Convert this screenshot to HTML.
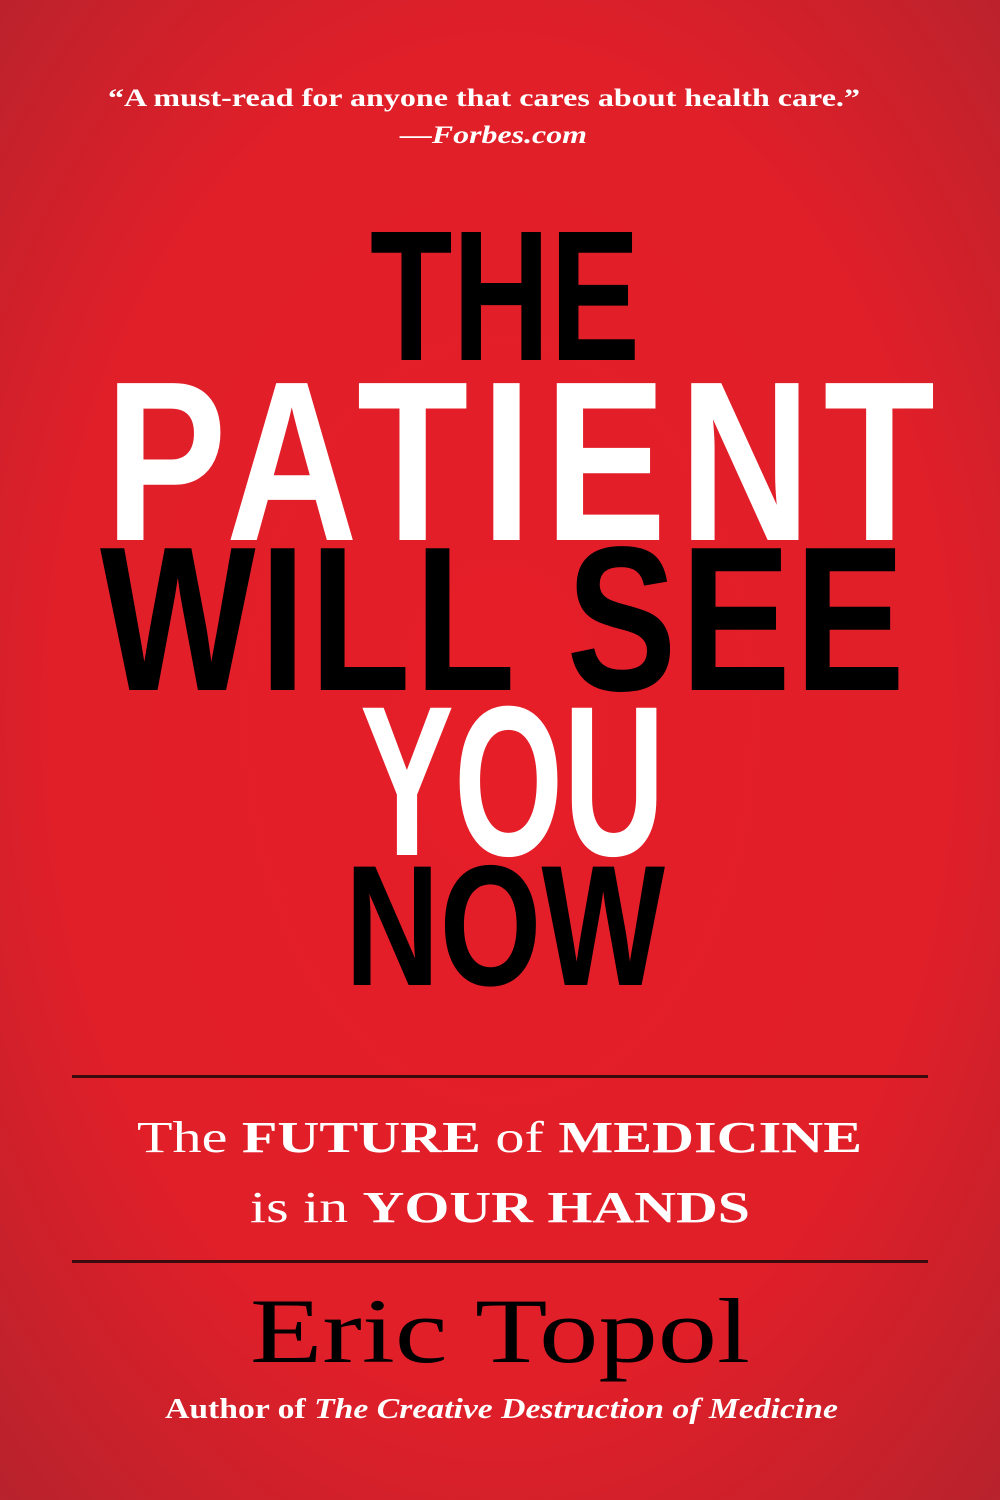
<!DOCTYPE html>
<html><head><meta charset="utf-8"><style>
html,body{margin:0;padding:0;}
body{width:1000px;height:1500px;overflow:hidden;}
svg{display:block;}
</style></head><body>
<svg width="1000" height="1500" viewBox="0 0 1000 1500" xmlns="http://www.w3.org/2000/svg">
<defs>
<radialGradient id="bg" cx="50%" cy="48%" r="75%">
<stop offset="0" stop-color="#e61e28"/>
<stop offset="0.6" stop-color="#e01f29"/>
<stop offset="1" stop-color="#b3232d"/>
</radialGradient>
</defs>
<rect width="1000" height="1500" fill="url(#bg)"/>
<g font-family="'Liberation Serif',serif" font-weight="bold" fill="#fff">
<text x="108" y="106" font-size="25" textLength="752" lengthAdjust="spacingAndGlyphs">“A must-read for anyone that cares about health care.”</text>
<text x="400" y="143" font-size="25" font-style="italic" textLength="187" lengthAdjust="spacingAndGlyphs">—Forbes.com</text>
</g>
<g font-family="'Liberation Sans',sans-serif" font-weight="bold">
<text x="370" y="360" font-size="186" fill="#000" textLength="270" lengthAdjust="spacingAndGlyphs">THE</text>
<text x="360" y="855" font-size="214" fill="#fff" textLength="305" lengthAdjust="spacingAndGlyphs">YOU</text>
<text x="345" y="985" font-size="172" fill="#000" textLength="320" lengthAdjust="spacingAndGlyphs">NOW</text>
</g>
<g font-family="'Liberation Sans',sans-serif" font-weight="bold" transform="scale(0.8,1)">
<text x="131.25" y="540" font-size="228" fill="#fff" textLength="1037.5" lengthAdjust="spacing">PATIENT</text>
<text x="125" y="690" font-size="206" fill="#000" textLength="1006" lengthAdjust="spacing">WILL SEE</text>
</g>
<rect x="72" y="1075" width="856" height="3" fill="#3a0a0c"/>
<rect x="72" y="1260" width="856" height="3" fill="#3a0a0c"/>
<g font-family="'Liberation Serif',serif" fill="#fff">
<text x="137" y="1152" font-size="44" textLength="725" lengthAdjust="spacingAndGlyphs">The <tspan font-weight="bold">FUTURE</tspan> of <tspan font-weight="bold">MEDICINE</tspan></text>
<text x="250" y="1222" font-size="44" textLength="500" lengthAdjust="spacingAndGlyphs">is in <tspan font-weight="bold">YOUR HANDS</tspan></text>
</g>
<text x="250" y="1362" font-family="'Liberation Serif',serif" font-size="92" fill="#000" textLength="500" lengthAdjust="spacingAndGlyphs">Eric Topol</text>
<text x="165" y="1418" font-family="'Liberation Serif',serif" font-weight="bold" font-size="28" fill="#fff" textLength="673" lengthAdjust="spacingAndGlyphs">Author of <tspan font-style="italic">The Creative Destruction of Medicine</tspan></text>
</svg>
</body></html>
